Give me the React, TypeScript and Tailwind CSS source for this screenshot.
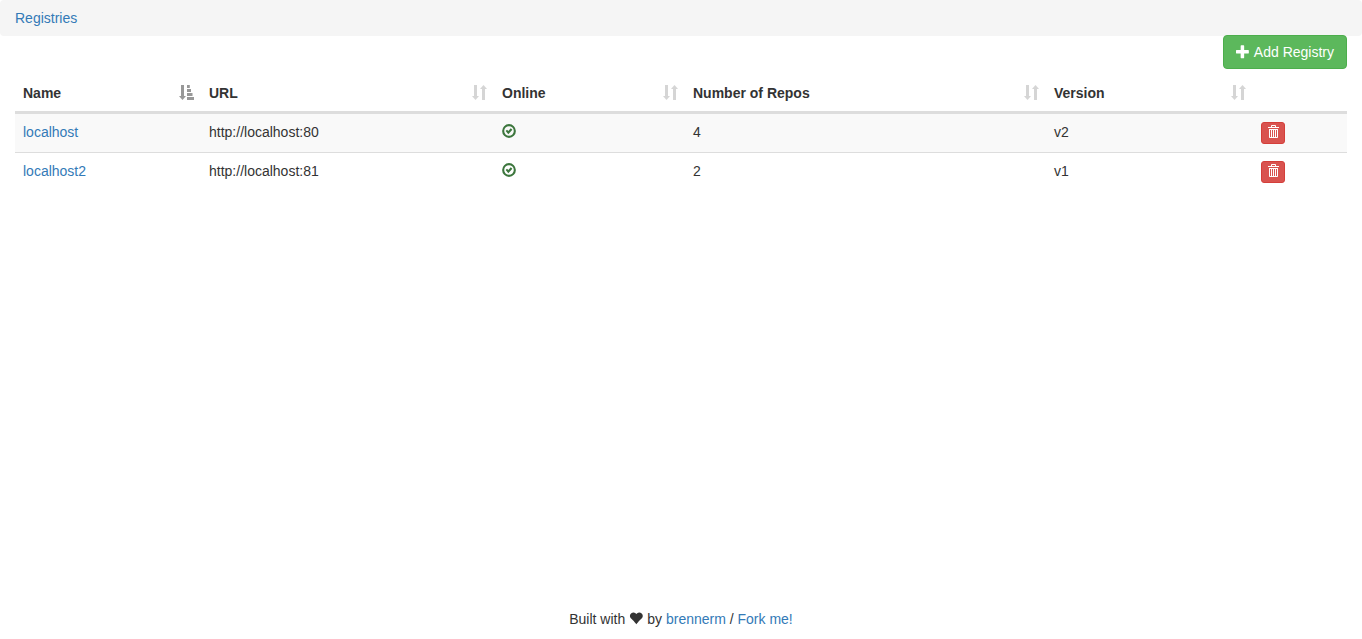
import type { ReactNode } from "react";

const GLYPHS = {
  plus: {
    box: "0 -1130 1200 1200",
    d: "M450 1100h200q21 0 35.500 -14.500t14.500 -35.500v-350h350q21 0 35.500 -14.500t14.500 -35.500v-200q0 -21 -14.500 -35.500t-35.500 -14.500h-350v-350q0 -21 -14.500 -35.500t-35.500 -14.500h-200q-21 0 -35.500 14.500t-14.500 35.500v350h-350q-21 0 -35.500 14.500t-14.500 35.500v200q0 21 14.500 35.500t35.500 14.500h350v350q0 21 14.500 35.500t35.500 14.500z",
  },
  trash: {
    box: "0 -1200 1200 1300",
    d: "M500 1200h300q41 0 70.500 -29.500t29.500 -70.500v-100h275q10 0 17.500 -7.500t7.500 -17.500v-75h-1100v75q0 10 7.500 17.500t17.500 7.500h275v100q0 41 29.500 70.500t70.500 29.500zM500 1100v-100h300v100zM1100 800v-800q0 -41 -29.500 -70.500t-70.500 -29.500h-700q-41 0 -70.500 29.500t-29.500 70.500v800zM300 700v-700h100v700zM500 700v-700h100v700zM700 700v-700h100v700zM900 700v-700h100v700z",
  },
  heart: {
    box: "20 -1130 1200 1200",
    d: "M649 949q48 68 109.500 104t121.500 38.500t118.500 -20t102.500 -64t71 -100.500t27 -123q0 -57 -33.500 -117.500t-94 -124.500t-126.500 -127.500t-150 -152.500t-146 -174q-62 85 -145.500 174t-150 152.500t-126.500 127.500t-93.500 124.500t-33.500 117.500q0 64 28 123t73 100.500t104 64t119 20t120.500 -38.500t104.500 -104z",
  },
  okCircle: {
    box: "0 -1200 1200 1200",
    d: "M600 1190a590 590 0 1 0 0 -1180a590 590 0 1 0 0 1180zM600 1010a410 410 0 1 1 0 -820a410 410 0 1 1 0 820zM315 600L430 715L545 610L750 835L890 715L540 325z",
  },
  sort: {
    box: "0 -1500 1500 1500",
    d: "M500 1500V400H700L350 0L0 400H200V1500zM1300 0V1100H1500L1150 1500L800 1100H1000V0z",
  },
  sortAsc: {
    box: "0 -1500 1500 1500",
    d: "M500 1500V400H700L350 0L0 400H200V1500zM800 1500H1080V1200H800zM800 1100H1200V800H800zM800 700H1350V400H800zM800 300H1500V0H800z",
  },
};

type GlyphProps = { name: keyof typeof GLYPHS; className: string };

function Glyph({ name, className }: GlyphProps) {
  const { box, d } = GLYPHS[name];
  return (
    <svg viewBox={box} className={className} fill="currentColor" fillRule="evenodd" aria-hidden="true">
      <path d={d} transform="scale(1 -1)" />
    </svg>
  );
}

function TextLink({ children }: { children: ReactNode }) {
  return (
    <a href="#" className="text-[#337ab7] hover:text-[#23527c] hover:underline">
      {children}
    </a>
  );
}

const columns = [
  { label: "Name", width: "w-[13.965%]", sorted: true },
  { label: "URL", width: "w-[21.998%]", sorted: false },
  { label: "Online", width: "w-[14.34%]", sorted: false },
  { label: "Number of Repos", width: "w-[27.103%]", sorted: false },
  { label: "Version", width: "w-[15.541%]", sorted: false },
];

const registries = [
  { name: "localhost", url: "http://localhost:80", repos: 4, version: "v2" },
  { name: "localhost2", url: "http://localhost:81", repos: 2, version: "v1" },
];

export default function App() {
  return (
    <div className="flex min-h-screen flex-col bg-white font-['Liberation_Sans',Arial,sans-serif] text-sm leading-5 text-[#333]">
      <nav aria-label="Breadcrumb" className="rounded bg-[#f5f5f5] px-[15px] py-2">
        <TextLink>Registries</TextLink>
      </nav>

      <main className="-mt-px flex-1 px-[15px]">
        <div className="mb-1.5 flex justify-end">
          <button
            type="button"
            className="flex cursor-pointer items-center gap-1 rounded border border-[#4cae4c] bg-[#5cb85c] px-3 py-1.5 text-white hover:bg-[#449d44]"
          >
            <Glyph name="plus" className="size-3.5" />
            Add Registry
          </button>
        </div>

        <table className="w-full table-fixed border-collapse">
          <thead>
            <tr className="border-b-3 border-[#ddd]">
              {columns.map((c) => (
                <th
                  key={c.label}
                  scope="col"
                  aria-sort={c.sorted ? "ascending" : undefined}
                  className={`${c.width} p-0 text-left font-bold`}
                >
                  <button
                    type="button"
                    className="flex w-full cursor-pointer items-start justify-between py-2 pr-[7px] pl-2"
                  >
                    {c.label}
                    <Glyph
                      name={c.sorted ? "sortAsc" : "sort"}
                      className={c.sorted ? "mt-0.5 size-[15px] opacity-50" : "mt-0.5 size-[15px] opacity-20"}
                    />
                  </button>
                </th>
              ))}
              <td />
            </tr>
          </thead>
          <tbody>
            {registries.map((r) => (
              <tr key={r.name} className="border-b border-[#ddd] align-top odd:bg-[#f9f9f9] last:border-b-0">
                <td className="p-2">
                  <TextLink>{r.name}</TextLink>
                </td>
                <td className="p-2">{r.url}</td>
                <td className="p-2">
                  <span role="img" aria-label="Online" className="flex h-5 items-start pt-0.5 text-[#3c763d]">
                    <Glyph name="okCircle" className="size-3.5" />
                  </span>
                </td>
                <td className="p-2">{r.repos}</td>
                <td className="p-2">{r.version}</td>
                <td className="p-2">
                  <button
                    type="button"
                    aria-label={`Delete ${r.name}`}
                    className="flex h-[22px] cursor-pointer items-start rounded-[3px] border border-[#d43f3a] bg-[#d9534f] px-[5px] pt-0.5 text-white hover:bg-[#c9302c]"
                  >
                    <Glyph name="trash" className="h-[13px] w-3" />
                  </button>
                </td>
              </tr>
            ))}
          </tbody>
        </table>
      </main>

      <footer className="flex items-center justify-center gap-1 pb-2.5">
        <span>Built with</span>
        <Glyph name="heart" className="size-3.5" />
        <span>
          by <TextLink>brennerm</TextLink> / <TextLink>Fork me!</TextLink>
        </span>
      </footer>
    </div>
  );
}
